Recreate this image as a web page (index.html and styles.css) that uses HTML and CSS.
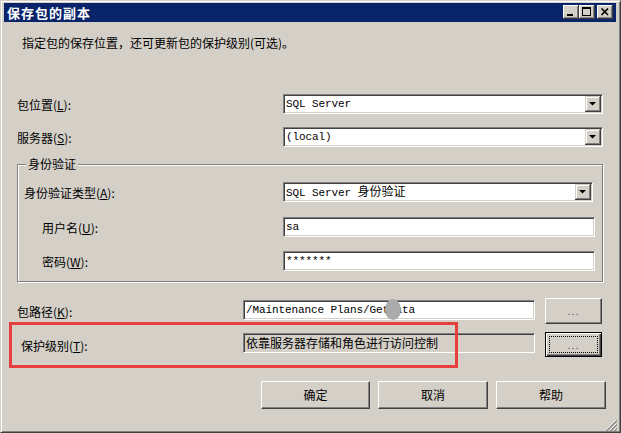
FILE: index.html
```html
<!DOCTYPE html>
<html>
<head>
<meta charset="utf-8">
<link rel="stylesheet" href="styles.css">
</head>
<body>
<div class="window">
  <div class="titlebar">
    <span class="title">保存包的副本</span>
    <div class="tb-btns">
      <span class="tbtn"><svg width="16" height="14" viewBox="0 0 16 14"><rect x="4" y="9" width="6" height="2" fill="#000"/></svg></span>
      <span class="tbtn"><svg width="16" height="14" viewBox="0 0 16 14"><rect x="3" y="2" width="9" height="2" fill="#000"/><rect x="3" y="2" width="1" height="9" fill="#000"/><rect x="11" y="2" width="1" height="9" fill="#000"/><rect x="3" y="10" width="9" height="1" fill="#000"/></svg></span>
      <span class="tbtn gap"><svg width="16" height="14" viewBox="0 0 16 14"><path d="M4.5 3.5 L11 10 M11 3.5 L4.5 10" stroke="#000" stroke-width="1.7" fill="none"/></svg></span>
    </div>
  </div>
  <div class="body">
    <p class="desc">指定包的保存位置，还可更新包的保护级别(可选)。</p>

    <div class="row r1">
      <span class="label">包位置(<u>L</u>):</span>
      <div class="combo w320"><span class="val mono">SQL Server</span><span class="drop"><svg width="16" height="16" viewBox="0 0 16 16"><polygon points="4,6 11,6 7.5,9.5" fill="#000"/></svg></span></div>
    </div>
    <div class="row r2">
      <span class="label">服务器(<u>S</u>):</span>
      <div class="combo w320"><span class="val mono">(local)</span><span class="drop"><svg width="16" height="16" viewBox="0 0 16 16"><polygon points="4,6 11,6 7.5,9.5" fill="#000"/></svg></span></div>
    </div>

    <div class="group">
      <span class="legend">身份验证</span>
      <div class="row g1">
        <span class="label glabel">身份验证类型(<u>A</u>):</span>
        <div class="combo w310"><span class="val"><span class="mono">SQL Server </span>身份验证</span><span class="drop"><svg width="16" height="16" viewBox="0 0 16 16"><polygon points="4,6 11,6 7.5,9.5" fill="#000"/></svg></span></div>
      </div>
      <div class="row g2">
        <span class="label glabel indent">用户名(<u>U</u>):</span>
        <div class="field w312"><span class="val mono">sa</span></div>
      </div>
      <div class="row g3">
        <span class="label glabel indent">密码(<u>W</u>):</span>
        <div class="field w312"><span class="val mono">*******</span></div>
      </div>
    </div>

    <div class="row2 path">
      <span class="label plabel">包路径(<u>K</u>):</span>
      <div class="field w292 pf"><span class="val mono">/Maintenance Plans/GetData</span></div>
      <span class="btn dots">...</span>
    </div>
    <div class="row2 prot">
      <span class="label plabel in4">保护级别(<u>T</u>):</span>
      <div class="field w292 ro pf2"><span class="val">依靠服务器存储和角色进行访问控制</span></div>
      <span class="btn dots focus"><span class="focusin">...</span></span>
    </div>

    <div class="actions">
      <span class="btn big w109">确定</span>
      <span class="btn big w110">取消</span>
      <span class="btn big w110">帮助</span>
    </div>
  </div>
  <div class="redbox"></div>
  <div class="blob"></div>
  <div class="grip"><svg width="12" height="12" viewBox="0 0 12 12">
    <path d="M11 1 L1 11 M11 5 L5 11 M11 9 L9 11" stroke="#fff" stroke-width="1"/>
    <path d="M12 1.5 L1.5 12 M12 5.5 L5.5 12 M12 9.5 L9.5 12" stroke="#808080" stroke-width="1.2"/>
  </svg></div>
</div>
</body>
</html>
```
FILE: styles.css
```css
html, body {
  margin: 0;
  padding: 0;
  background: #d4d0c8;
}
body {
  font-family: "Noto Sans CJK SC", "Noto Sans", sans-serif;
  font-size: 12px;
  line-height: 16px;
  color: #000;
}
.window {
  position: relative;
  width: 621px;
  height: 433px;
  box-sizing: border-box;
  background: #d4d0c8;
  border: 1px solid;
  border-color: #d4d0c8 #404040 #404040 #d4d0c8;
  box-shadow: inset 1px 1px 0 #fff, inset -1px -1px 0 #808080;
  padding: 2px 4px 2px 3px;
  display: flex;
  flex-direction: column;
}
.titlebar {
  height: 19px;
  background: #0a246a;
  display: flex;
  align-items: center;
  padding-left: 3px;
  flex: none;
}
.title {
  color: #fff;
  font-weight: bold;
  font-size: 13px;
  letter-spacing: 1px;
}
.tb-btns {
  margin-left: auto;
  align-self: flex-start;
  margin-top: 2px;
  padding-right: 3px;
  display: flex;
}
.tbtn {
  width: 16px;
  height: 14px;
  background: #d4d0c8;
  box-shadow: inset -1px -1px 0 #404040, inset 1px 1px 0 #fff, inset -2px -2px 0 #808080, inset 2px 2px 0 #d4d0c8;
  display: block;
}
.tbtn svg { display: block; }
.tbtn.gap { margin-left: 2px; }

.body {
  padding-left: 13px;
  padding-right: 10px;
  flex: 1;
}
.desc {
  margin: 13px 0 0 5px;
}
.row {
  display: flex;
  align-items: center;
  height: 20px;
}
.r1 { margin-top: 43px; }
.r2 { margin-top: 13px; }
.label {
  flex: none;
  width: 266px;
  box-sizing: border-box;
  padding-top: 2px;
}
.label u { text-decoration: underline; }
.mono {
  font-family: "Liberation Mono", monospace;
  font-size: 11px;
  letter-spacing: -0.1px;
}
.combo, .field {
  flex: none;
  display: flex;
  align-items: center;
  height: 20px;
  box-sizing: border-box;
  background: #fff;
  border: 1px solid;
  border-color: #808080 #fff #fff #808080;
  box-shadow: inset 1px 1px 0 #404040, inset -1px -1px 0 #d4d0c8;
  padding: 1px;
  white-space: nowrap;
  overflow: hidden;
}
.val {
  flex: 1;
  padding-left: 1px;
}
.drop {
  width: 16px;
  height: 16px;
  flex: none;
  background: #d4d0c8;
  box-shadow: inset -1px -1px 0 #404040, inset 1px 1px 0 #d4d0c8, inset -2px -2px 0 #808080, inset 2px 2px 0 #fff;
}
.drop svg { display: block; }
.w320 { width: 320px; }
.w310 { width: 310px; }
.w312 { width: 312px; }
.w292 { width: 292px; }

.group {
  margin-top: 17px;
  width: 586px;
  box-sizing: border-box;
  border: 1px solid #808080;
  box-shadow: inset 1px 1px 0 #fff, 1px 1px 0 #fff;
  padding: 0 0 10px 6px;
}
.legend {
  display: block;
  width: fit-content;
  margin: -9px 0 0 2px;
  padding: 0 2px;
  background: #d4d0c8;
  line-height: 16px;
}
.glabel { width: 259px; }
.indent { padding-left: 18px; }
.g1 { margin-top: 10px; }
.g2 { margin-top: 15px; }
.g3 { margin-top: 14px; }

.row2 {
  display: flex;
  align-items: flex-start;
  height: 26px;
}
.path { margin-top: 16px; }
.prot { margin-top: 8px; }
.plabel {
  width: 226px;
  padding-top: 6px;
}
.in4 { padding-left: 4px; }
.pf { margin-top: 2px; }
.pf2 { margin-top: 1px; }
.field.ro { background: #d4d0c8; }

.btn {
  flex: none;
  display: flex;
  align-items: center;
  justify-content: center;
  box-sizing: border-box;
  background: #d4d0c8;
  border: 1px solid;
  border-color: #fff #404040 #404040 #fff;
  box-shadow: inset -1px -1px 0 #808080;
}
.dots {
  margin-left: 10px;
  width: 57px;
  height: 26px;
  font-family: "Liberation Sans", sans-serif;
  font-size: 11px;
  color: #555;
  letter-spacing: 1px;
}
.prot .dots { height: 25px; }
.dots.focus {
  border: 1px solid #000;
  box-shadow: inset 1px 1px 0 #fff, inset -1px -1px 0 #404040, inset -2px -2px 0 #808080;
}
.focusin {
  display: flex;
  align-items: center;
  justify-content: center;
  width: 47px;
  height: 15px;
  outline: 1px dotted #000;
}
.actions {
  display: flex;
  justify-content: flex-end;
  gap: 8px;
  margin-top: 23px;
}
.big {
  height: 28px;
  padding-bottom: 1px;
}
.w109 { width: 109px; }
.w110 { width: 110px; }

.redbox {
  position: absolute;
  left: 8px;
  top: 321px;
  width: 449px;
  height: 46px;
  box-sizing: border-box;
  border: 3px solid #e5403d;
}
.blob {
  position: absolute;
  left: 384px;
  top: 298px;
  width: 16px;
  height: 21px;
  border-radius: 50%;
  background: #ababab;
  filter: blur(0.6px);
}
.grip {
  position: absolute;
  right: 3px;
  bottom: 1px;
  width: 12px;
  height: 12px;
}
.grip svg { display: block; }
```
